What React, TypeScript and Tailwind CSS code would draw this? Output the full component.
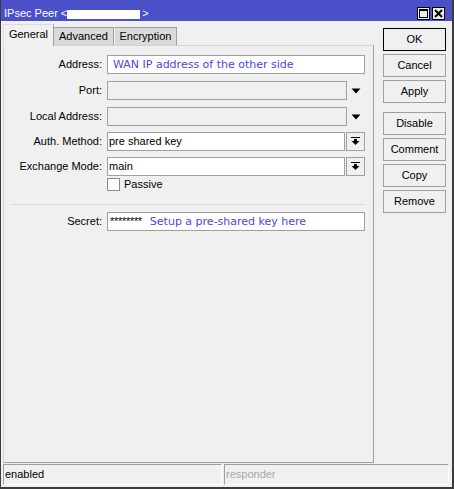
import React from 'react';

const sans = "font-['Liberation_Sans',Arial,sans-serif]";
const hint = "font-['DejaVu_Sans',Verdana,sans-serif] text-[11px] text-[#4747e0]";

function DropTriangle() {
  return (
    <div className="w-[18px] h-[19px] flex items-center justify-center">
      <svg width="10" height="6" viewBox="0 0 10 6">
        <polygon points="0.5,0.5 9.5,0.5 5,5.5" fill="#000" />
      </svg>
    </div>
  );
}

function ComboButton() {
  return (
    <div className="ml-px w-[19px] h-[19px] border border-[#a0a0a0] bg-[#f0f0f0] flex items-center justify-center">
      <svg width="9" height="9" viewBox="0 0 9 9">
        <rect x="0" y="0" width="9" height="1" fill="#000" />
        <rect x="3" y="2" width="3" height="2" fill="#000" />
        <polygon points="0.5,4 8.5,4 4.5,8" fill="#000" />
      </svg>
    </div>
  );
}

function Row({ label, children, className = '' }: { label: string; children: React.ReactNode; className?: string }) {
  return (
    <div className={`flex items-center h-[19px] ${className}`}>
      <div className="w-[98px] text-right whitespace-nowrap">{label}</div>
      <div className="ml-[5px] flex items-center">{children}</div>
    </div>
  );
}

function Btn({ children, primary, className = '' }: { children: React.ReactNode; primary?: boolean; className?: string }) {
  return (
    <div
      className={`h-[23px] w-[63px] flex items-center justify-center bg-[#f0f0f0] border ${
        primary ? 'border-black' : 'border-[#a0a0a0]'
      } ${className}`}
    >
      {children}
    </div>
  );
}

export default function App() {
  return (
    <div
      className={`w-[454px] h-[489px] bg-[#f0f0f0] border-l border-r-2 border-b-2 border-[#3c3c3c] flex flex-col text-[11px] leading-[13px] text-black ${sans}`}
    >
      {/* title bar */}
      <div className="h-[21px] shrink-0 bg-[#4b50c8] flex justify-between">
        <div className="pt-[7px] pl-[3px] text-white flex items-start whitespace-nowrap">
          <span>IPsec Peer &lt;</span>
          <span className="inline-block w-[73px] h-[9px] bg-white mt-[3px]" />
          <span className="ml-[2px]">&gt;</span>
        </div>
        <div className="pt-[7px] pr-[7px] flex gap-[2px] items-start">
          <div className="w-[13px] h-[13px] bg-[#ececec] border border-black flex items-center justify-center">
            <svg width="9" height="9" viewBox="0 0 9 9">
              <rect x="0.5" y="0.5" width="8" height="8" fill="none" stroke="#000" />
              <rect x="0" y="0" width="9" height="2" fill="#000" />
            </svg>
          </div>
          <div className="w-[13px] h-[13px] bg-[#ececec] border border-black flex items-center justify-center">
            <svg width="9" height="9" viewBox="0 0 9 9">
              <path d="M1 1 L8 8 M8 1 L1 8" stroke="#000" strokeWidth="2" />
            </svg>
          </div>
        </div>
      </div>

      {/* body */}
      <div className="flex flex-1 min-h-0">
        <div className="ml-[2px] w-[371px] pt-[3px] flex flex-col">
          {/* tabs */}
          <div className="h-[21px] shrink-0 flex items-end">
            <div className="relative z-10 -mb-px h-[22px] w-[51px] bg-[#f0f0f0] border-t border-l border-r border-t-[#dcdcdc] border-l-[#dcdcdc] border-r-[#a0a0a0] flex items-center justify-center pb-[2px]">
              General
            </div>
            <div className="h-[18px] w-[60px] bg-[#dadada] border-t border-r border-[#a0a0a0] flex items-center justify-center">
              Advanced
            </div>
            <div className="h-[18px] w-[63px] bg-[#dadada] border-t border-r border-l border-l-[#f4f4f4] border-t-[#a0a0a0] border-r-[#a0a0a0] flex items-center justify-center">
              Encryption
            </div>
          </div>

          {/* panel */}
          <div className="flex-1 border border-t-[#d4d4d4] border-l-[#d4d4d4] border-r-[#a0a0a0] border-b-[#a0a0a0] pt-[9px] flex flex-col">
            <Row label="Address:">
              <div className={`w-[258px] h-[19px] bg-white border border-[#a0a0a0] pl-[5px] flex items-center whitespace-nowrap ${hint}`}>
                WAN IP address of the other side
              </div>
            </Row>
            <Row label="Port:" className="mt-[7px]">
              <div className="w-[240px] h-[19px] bg-[#f0f0f0] border border-[#a0a0a0]" />
              <DropTriangle />
            </Row>
            <Row label="Local Address:" className="mt-[7px]">
              <div className="w-[240px] h-[19px] bg-[#f0f0f0] border border-[#a0a0a0]" />
              <DropTriangle />
            </Row>
            <Row label="Auth. Method:" className="mt-[6px]">
              <div className="w-[238px] h-[19px] bg-white border border-[#a0a0a0] pl-px flex items-center">
                pre shared key
              </div>
              <ComboButton />
            </Row>
            <Row label="Exchange Mode:" className="mt-[6px]">
              <div className="w-[238px] h-[19px] bg-white border border-[#a0a0a0] pl-px flex items-center">
                main
              </div>
              <ComboButton />
            </Row>
            <div className="mt-[2px] h-[13px] flex items-center pl-[103px]">
              <div className="w-[13px] h-[13px] bg-white border border-[#8c8c8c]" />
              <span className="ml-[4px]">Passive</span>
            </div>

            <div className="ml-[7px] mt-[13px] w-[354px] h-px bg-[#d9d9d9]" />

            <Row label="Secret:" className="mt-[7px]">
              <div className="w-[258px] h-[19px] bg-white border border-[#a0a0a0] pl-[2px] flex items-center whitespace-nowrap">
                <span className="tracking-[-0.3px]">********</span>
                <span className={`ml-[8px] ${hint}`}>Setup a pre-shared key here</span>
              </div>
            </Row>
          </div>
        </div>

        {/* buttons */}
        <div className="ml-[9px] w-[63px] pt-[7px] flex flex-col">
          <Btn primary>OK</Btn>
          <Btn className="mt-[3px]">Cancel</Btn>
          <Btn className="mt-[3px]">Apply</Btn>
          <Btn className="mt-[9px]">Disable</Btn>
          <Btn className="mt-[3px]">Comment</Btn>
          <Btn className="mt-[3px]">Copy</Btn>
          <Btn className="mt-[3px]">Remove</Btn>
        </div>
      </div>

      {/* status bar */}
      <div className="h-[21px] mt-px mb-[2px] ml-[2px] shrink-0 flex gap-[2px]">
        <div className="w-[219px] border border-t-[#a0a0a0] border-l-[#a0a0a0] border-r-white border-b-white pl-px flex items-center">
          enabled
        </div>
        <div className="w-[225px] border border-t-[#a0a0a0] border-l-[#a0a0a0] border-r-white border-b-white pl-px flex items-center text-[#a8a8a8]">
          responder
        </div>
      </div>
    </div>
  );
}
